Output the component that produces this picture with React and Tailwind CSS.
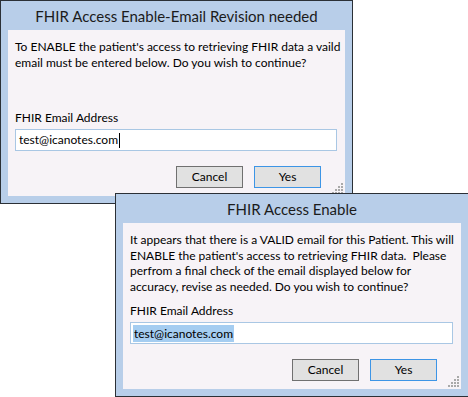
import React from "react";

function Grip() {
  const dots = [];
  for (let r = 0; r < 4; r++) {
    for (let c = 3 - r; c < 4; c++) {
      dots.push(<rect key={`${r}-${c}`} x={c * 3} y={r * 3} width="2" height="2" fill="#a9a9a9" />);
    }
  }
  return (
    <svg className="absolute right-[2px] bottom-[2px]" width="11" height="11" viewBox="0 0 11 11">
      {dots}
    </svg>
  );
}

function Dialog({ className, title, lines, selected, caret }) {
  return (
    <div className={`absolute h-[204px] border border-[#2b3036] bg-[#b8cee9] flex flex-col ${className}`}>
      <div className="h-[29px] shrink-0 flex items-center justify-center text-[15px] text-[#1b1b1b] pt-[1px]">
        {title}
      </div>
      <div className="relative mx-[7px] h-[166px] bg-[#f7f3f7] flex flex-col text-[12px] text-black">
        <div className="h-[80px] pt-[9px] pl-[7px] leading-[15.5px] whitespace-pre">
          {lines.map((l, i) => (
            <div key={i}>{l}</div>
          ))}
        </div>
        <div className="pl-[7px] leading-[15px]">FHIR Email Address</div>
        <div className="mt-[4px] ml-[7px] mr-[8px] h-[22px] border border-[#a9c7e4] bg-white flex items-center pl-[2px]">
          {selected ? (
            <span className="bg-[#a5cdf1] leading-[17px] px-[1px]">test@icanotes.com</span>
          ) : (
            <span className="flex items-center pl-[1px]">
              test@icanotes.com
              <span className="inline-block w-[1px] h-[15px] bg-black ml-[1px]" />
            </span>
          )}
        </div>
        <div className="mt-[15px] flex justify-end gap-[11px] pr-[24px]">
          <button className="w-[67px] h-[22px] border border-[#707070] bg-[#e1e1e1] text-[12px] leading-none">Cancel</button>
          <button className="w-[67px] h-[22px] border border-[#3d95e6] bg-[#e1e1e1] text-[12px] leading-none">Yes</button>
        </div>
        <Grip />
      </div>
    </div>
  );
}

export default function App() {
  return (
    <div
      className="relative w-[468px] h-[397px] overflow-hidden bg-white"
      style={{ fontFamily: 'Lato, "Noto Sans", sans-serif' }}
    >
      <Dialog
        className="left-0 top-0 w-[353px]"
        title="FHIR Access Enable-Email Revision needed"
        lines={[
          "To ENABLE the patient's access to retrieving FHIR data a vaild",
          "email must be entered below. Do you wish to continue?",
        ]}
        caret
      />
      <Dialog
        className="left-[115px] top-[193px] w-[354px]"
        title="FHIR Access Enable"
        lines={[
          "It appears that there is a VALID email for this Patient. This will",
          "ENABLE the patient's access to retrieving FHIR data.  Please",
          "perfrom a final check of the email displayed below for",
          "accuracy, revise as needed. Do you wish to continue?",
        ]}
        selected
      />
    </div>
  );
}
